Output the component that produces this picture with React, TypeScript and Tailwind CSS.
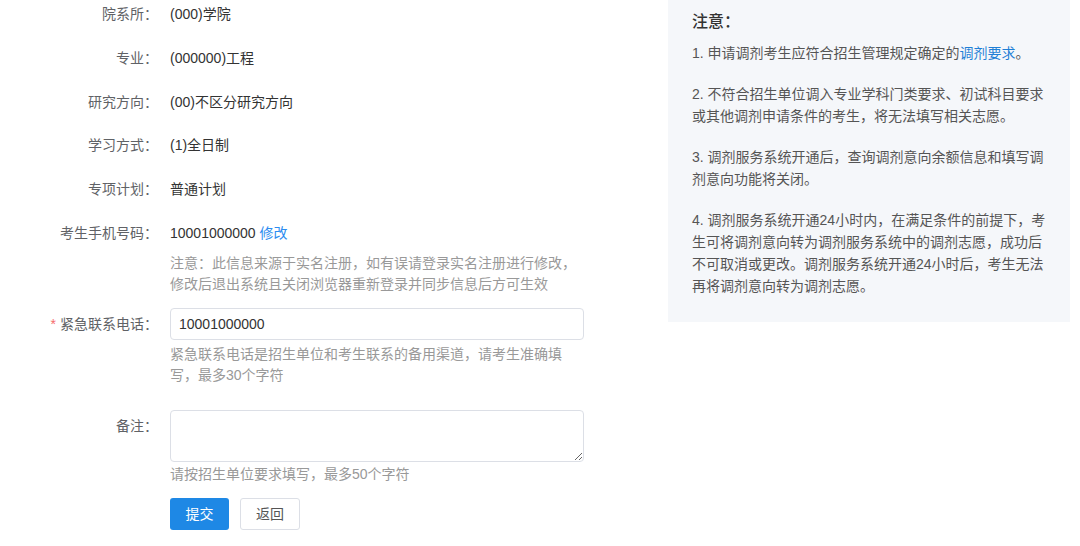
import type { ReactNode } from 'react'

type RowProps = {
  label: ReactNode
  children?: ReactNode
  className?: string
  labelClassName?: string
}

const Row = ({ label, children, className = '', labelClassName = 'leading-5' }: RowProps) => (
  <div className={`flex leading-5 ${className}`}>
    <div className={`w-[158px] shrink-0 text-right text-[#606266] ${labelClassName}`}>{label}</div>
    <div className="ml-3 w-[414px] text-[#333]">{children}</div>
  </div>
)

const notes: ReactNode[][] = [
  [
    <>
      1. 申请调剂考生应符合招生管理规定确定的<span className="text-[#1f7fd6]">调剂要求</span>。
    </>,
  ],
  ['2. 不符合招生单位调入专业学科门类要求、初试科目要求', '或其他调剂申请条件的考生，将无法填写相关志愿。'],
  ['3. 调剂服务系统开通后，查询调剂意向余额信息和填写调', '剂意向功能将关闭。'],
  [
    '4. 调剂服务系统开通24小时内，在满足条件的前提下，考',
    '生可将调剂意向转为调剂服务系统中的调剂志愿，成功后',
    '不可取消或更改。调剂服务系统开通24小时后，考生无法',
    '再将调剂意向转为调剂志愿。',
  ],
]

const App = () => {
  return (
    <div className="flex h-[546px] w-[1080px] overflow-hidden bg-white text-[14px] font-['Liberation_Sans','Noto_Sans_CJK_SC',sans-serif]">
      <div className="w-[668px] shrink-0 pt-[4px]">
        <div className="flex flex-col gap-[23.8px]">
          <Row label="院系所：">(000)学院</Row>
          <Row label="专业：">(000000)工程</Row>
          <Row label="研究方向：">(00)不区分研究方向</Row>
          <Row label="学习方式：">(1)全日制</Row>
          <Row label="专项计划：">普通计划</Row>
          <Row label="考生手机号码：">
            10001000000 <span className="cursor-pointer text-[#2d8cf0]">修改</span>
          </Row>
        </div>
        <Row label="">
          <p className="mt-[10px] leading-[21px] text-[#999]">
            注意：此信息来源于实名注册，如有误请登录实名注册进行修改，
            <br />
            修改后退出系统且关闭浏览器重新登录并同步信息后方可生效
          </p>
        </Row>

        <Row
          className="mt-[13px]"
          labelClassName="leading-8"
          label={
            <>
              <span className="mr-1 text-[#f56c6c]">*</span>紧急联系电话：
            </>
          }
        >
          <input
            defaultValue="10001000000"
            className="h-8 w-full rounded border border-[#dcdfe6] bg-white px-[8px] text-[14px] text-[#333] outline-none"
          />
          <p className="mt-[4px] leading-[21px] text-[#999]">
            紧急联系电话是招生单位和考生联系的备用渠道，请考生准确填
            <br />
            写，最多30个字符
          </p>
        </Row>

        <Row className="mt-[24px]" labelClassName="leading-8" label="备注：">
          <textarea className="block h-[52px] w-full rounded border border-[#dcdfe6] bg-white px-2 py-1 text-[14px] outline-none" />
          <p className="mt-[2px] leading-[21px] text-[#999]">请按招生单位要求填写，最多50个字符</p>
          <div className="mt-[13px] flex gap-[11px]">
            <button className="h-8 w-[59px] rounded-[3px] bg-[#1e88e5] text-white">提交</button>
            <button className="h-8 w-[60px] rounded-[3px] border border-[#dcdfe6] bg-white text-[#555]">返回</button>
          </div>
        </Row>
      </div>

      <div className="w-[402px] shrink-0 self-start bg-[#f5f7fa] px-6 pb-[25px] pt-[10px]">
        <h3 className="text-[16px] font-medium leading-6 text-[#333]">注意：</h3>
        <div className="mt-2 flex flex-col gap-[19px] leading-[22px] text-[#555]">
          {notes.map((lines, i) => (
            <p key={i}>
              {lines.map((line, j) => (
                <span key={j} className="block whitespace-nowrap">
                  {line}
                </span>
              ))}
            </p>
          ))}
        </div>
      </div>
    </div>
  )
}

export default App
